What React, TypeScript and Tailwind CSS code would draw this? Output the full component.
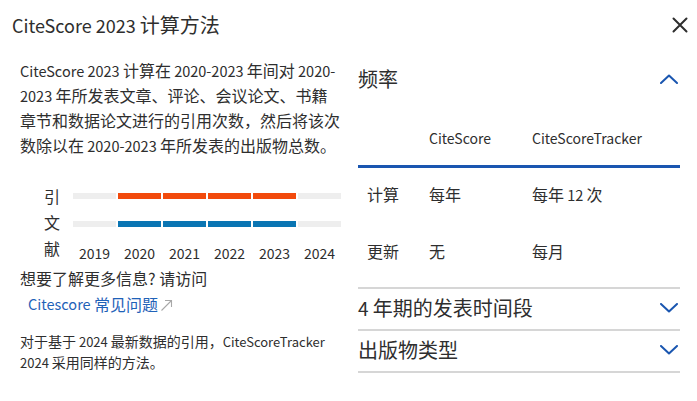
import React from 'react';

const years = [
  { year: '2019', active: false },
  { year: '2020', active: true },
  { year: '2021', active: true },
  { year: '2022', active: true },
  { year: '2023', active: true },
  { year: '2024', active: false },
];

// Latin runs are set a little smaller: the CJK face's Latin glyphs run wide
const L: React.FC<{ children: React.ReactNode; className?: string }> = ({ children, className = 'text-[14.5px]' }) => (
  <span className={className}>{children}</span>
);

const Chevron: React.FC<{ up?: boolean }> = ({ up = false }) => (
  <svg width="18" height="10" viewBox="0 0 18 10" fill="none" className="shrink-0">
    <path
      d={up ? 'M1 9 L9 1.5 L17 9' : 'M1 1 L9 8.5 L17 1'}
      stroke="#1a56b0"
      strokeWidth="2"
      strokeLinecap="round"
      strokeLinejoin="round"
    />
  </svg>
);

const CloseIcon: React.FC = () => (
  <svg width="16" height="16" viewBox="0 0 16 16" fill="none">
    <path d="M1.5 1.5 L14.5 14.5 M14.5 1.5 L1.5 14.5" stroke="#2e2e2e" strokeWidth="2" strokeLinecap="round" />
  </svg>
);

const ExternalIcon: React.FC = () => (
  <svg width="13" height="13" viewBox="0 0 13 13" fill="none" className="ml-[2px] mt-[2px]">
    <path d="M1.5 11.5 L11.5 1.5 M5 1.5 H11.5 V8" stroke="#a8a8a8" strokeWidth="1.1" />
  </svg>
);

const Bar: React.FC<{ color: string }> = ({ color }) => (
  <div className="flex gap-[2px]">
    {years.map((y) => (
      <div
        key={y.year}
        className="w-[43px] h-[6px]"
        style={{ backgroundColor: y.active ? color : '#eeeeee' }}
      />
    ))}
  </div>
);

export default function App() {
  return (
    <div className="w-[697px] h-[401px] bg-white text-[#2e2e2e] font-['Noto_Sans_CJK_SC','Noto_Sans',sans-serif] overflow-hidden">
      {/* Header */}
      <div className="flex justify-between items-center h-[50px] pl-[12px] pr-[9px]">
        <h1 className="text-[20px] leading-[28px] font-normal">
          <L className="text-[18px]">CiteScore 2023 </L>计算方法
        </h1>
        <CloseIcon />
      </div>

      <div className="flex">
        {/* Left column */}
        <div className="w-[341px] pl-[20px] shrink-0">
          <p className="mt-[8px] text-[16px] leading-[25px] whitespace-nowrap">
            <span className="block">
              <L>CiteScore 2023 </L>计算在<L> 2020-2023 </L>年间对<L> 2020-</L>
            </span>
            <span className="block">
              <L>2023 </L>年所发表文章、评论、会议论文、书籍
            </span>
            <span className="block">章节和数据论文进行的引用次数，然后将该次</span>
            <span className="block">
              数除以在<L> 2020-2023 </L>年所发表的出版物总数。
            </span>
          </p>

          <div className="flex mt-[25px] h-[80px]">
            <div className="w-[53px] shrink-0 pl-[24px] flex flex-col text-[16px] leading-[26px]">
              <span>引</span>
              <span>文</span>
              <span>献</span>
            </div>
            <div className="flex flex-col shrink-0 pt-[10px]">
              <Bar color="#f24a0c" />
              <div className="mt-[22px]">
                <Bar color="#0a75b3" />
              </div>
              <div className="flex gap-[2px] mt-[16px]">
                {years.map((y) => (
                  <span key={y.year} className="w-[43px] text-center text-[14px] leading-[20px]">
                    {y.year}
                  </span>
                ))}
              </div>
            </div>
          </div>

          <p className="mt-[2px] text-[16px] leading-[26px]">想要了解更多信息? 请访问</p>
          <a className="flex items-center pl-[8px] text-[16px] leading-[26px] text-[#1f62b8]">
            <L>Citescore&nbsp;</L>常见问题
            <ExternalIcon />
          </a>

          <p className="mt-[14px] text-[14px] leading-[21px] whitespace-nowrap">
            <span className="block">
              对于基于<L className="text-[13px]"> 2024 </L>最新数据的引用，<L className="text-[13px]">CiteScoreTracker</L>
            </span>
            <span className="block">
              <L className="text-[13px]">2024 </L>采用同样的方法。
            </span>
          </p>
        </div>

        {/* Right column */}
        <div className="ml-[17px] w-[322px]">
          <div className="flex justify-between items-center pt-[15px] pr-[2px]">
            <h2 className="text-[20px] leading-[28px] font-normal">频率</h2>
            <Chevron up />
          </div>

          <div className="mt-[35px] grid grid-cols-[71px_103px_1fr] text-[14px] leading-[20px] pb-[17px] border-b-[3px] border-[#1a56b0]">
            <span />
            <span>CiteScore</span>
            <span>CiteScoreTracker</span>
          </div>

          <div className="grid grid-cols-[71px_103px_1fr] text-[16px] leading-[24px] pt-[14px]">
            <span className="pl-[9px]">计算</span>
            <span>每年</span>
            <span>
              每年<L> 12 </L>次
            </span>
          </div>
          <div className="grid grid-cols-[71px_103px_1fr] text-[16px] leading-[24px] pt-[32px] pb-[24px] border-b-2 border-[#d6d6d6]">
            <span className="pl-[9px]">更新</span>
            <span>无</span>
            <span>每月</span>
          </div>

          <div className="flex justify-between items-center pt-[5px] pb-[7px] pr-[2px] border-b-2 border-[#d6d6d6]">
            <h2 className="text-[20px] leading-[28px] font-normal">
              <L className="text-[19px]">4 </L>年期的发表时间段
            </h2>
            <Chevron />
          </div>
          <div className="flex justify-between items-center pt-[5px] pb-[7px] pr-[2px] border-b-2 border-[#d6d6d6]">
            <h2 className="text-[20px] leading-[28px] font-normal">出版物类型</h2>
            <Chevron />
          </div>
        </div>
      </div>
    </div>
  );
}
